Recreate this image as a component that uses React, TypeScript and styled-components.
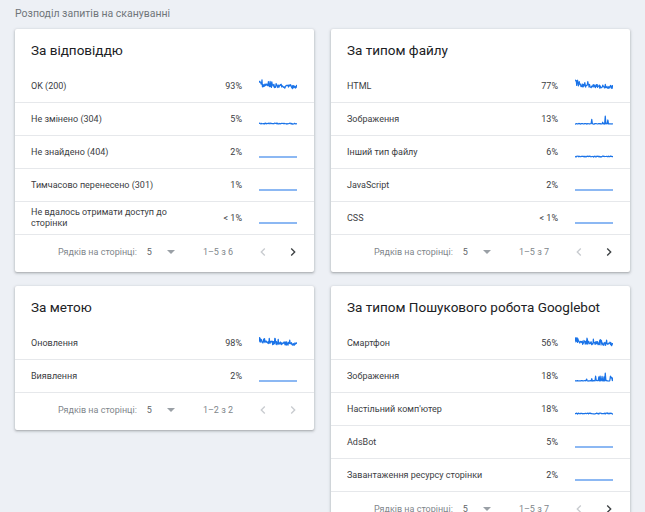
import React from "react";
import styled, { createGlobalStyle } from "styled-components";

const GlobalStyle = createGlobalStyle`
  html, body {
    margin: 0;
    padding: 0;
    background: #edf0f5;
    font-family: Roboto, "Noto Sans", Arial, sans-serif;
  }
  * { box-sizing: border-box; }
`;

type SparkKind = "high" | "spiky" | "low" | "flat";

interface RowData {
  label: string;
  pct: string;
  spark: SparkKind;
}

interface CardData {
  title: string;
  rows: RowData[];
  range: string;
  hasNext: boolean;
}

const cards: CardData[] = [
  {
    title: "За відповіддю",
    rows: [
      { label: "OK (200)", pct: "93%", spark: "high" },
      { label: "Не змінено (304)", pct: "5%", spark: "low" },
      { label: "Не знайдено (404)", pct: "2%", spark: "flat" },
      { label: "Тимчасово перенесено (301)", pct: "1%", spark: "flat" },
      { label: "Не вдалось отримати доступ до сторінки", pct: "< 1%", spark: "flat" },
    ],
    range: "1–5 з 6",
    hasNext: true,
  },
  {
    title: "За типом файлу",
    rows: [
      { label: "HTML", pct: "77%", spark: "high" },
      { label: "Зображення", pct: "13%", spark: "spiky" },
      { label: "Інший тип файлу", pct: "6%", spark: "low" },
      { label: "JavaScript", pct: "2%", spark: "flat" },
      { label: "CSS", pct: "< 1%", spark: "flat" },
    ],
    range: "1–5 з 7",
    hasNext: true,
  },
  {
    title: "За метою",
    rows: [
      { label: "Оновлення", pct: "98%", spark: "high" },
      { label: "Виявлення", pct: "2%", spark: "flat" },
    ],
    range: "1–2 з 2",
    hasNext: false,
  },
  {
    title: "За типом Пошукового робота Googlebot",
    rows: [
      { label: "Смартфон", pct: "56%", spark: "high" },
      { label: "Зображення", pct: "18%", spark: "spiky" },
      { label: "Настільний комп'ютер", pct: "18%", spark: "low" },
      { label: "AdsBot", pct: "5%", spark: "flat" },
      { label: "Завантаження ресурсу сторінки", pct: "2%", spark: "flat" },
    ],
    range: "1–5 з 7",
    hasNext: true,
  },
];

// deterministic noise so the sparklines look the same every render
function rng(seed: number) {
  let s = seed;
  return () => {
    s = (s * 9301 + 49297) % 233280;
    return s / 233280;
  };
}

function sparkPath(kind: SparkKind, seed: number) {
  const rand = rng(seed);
  const n = kind === "high" ? 90 : 60;
  const w = 38;
  const pts: string[] = [];
  for (let i = 0; i < n; i++) {
    const x = (i / (n - 1)) * w;
    let y = 12;
    if (kind === "high") {
      y = 4.5 + rand() * 3.5 + (i / n) * 1.8;
      if (i < 8) y = 0.8 + rand() * 6;
      else if (rand() > 0.88) y -= 3;
    } else if (kind === "spiky") {
      y = 11.4 + rand() * 0.7;
      if (i > 12 && rand() > 0.8) y = 7 + rand() * 4;
      if (i === 47) y = 4;
    } else if (kind === "low") {
      y = 11 + rand() * 1.1;
    }
    pts.push(`${i === 0 ? "M" : "L"}${x.toFixed(2)} ${y.toFixed(2)}`);
  }
  return pts.join(" ");
}

function Sparkline({ kind, seed }: { kind: SparkKind; seed: number }) {
  return (
    <Spark viewBox="0 0 38 14" width={38} height={14}>
      <path d={sparkPath(kind, seed)} fill="none" stroke="#1a73e8" strokeWidth={1.2} strokeLinejoin="round" />
    </Spark>
  );
}

function Chevron({ dir, enabled }: { dir: "left" | "right"; enabled: boolean }) {
  return (
    <PageBtn $enabled={enabled}>
      <svg width="16" height="16" viewBox="0 0 24 24">
        <path
          d={dir === "left" ? "M15.4 7.4 14 6l-6 6 6 6 1.4-1.4L10.8 12z" : "M8.6 16.6 10 18l6-6-6-6-1.4 1.4 4.6 4.6z"}
          fill="currentColor"
        />
      </svg>
    </PageBtn>
  );
}

function StatCard({ card, index }: { card: CardData; index: number }) {
  return (
    <Card>
      <CardTitle>{card.title}</CardTitle>
      {card.rows.map((r, i) => (
        <Row key={r.label + i}>
          <Label>{r.label}</Label>
          <Pct>{r.pct}</Pct>
          <Sparkline kind={r.spark} seed={index * 31 + i * 7 + 3} />
        </Row>
      ))}
      <Footer>
        <FooterLabel>Рядків на сторінці:</FooterLabel>
        <PageSize>
          5
          <Caret />
        </PageSize>
        <Range>{card.range}</Range>
        <Chevron dir="left" enabled={false} />
        <Chevron dir="right" enabled={card.hasNext} />
      </Footer>
    </Card>
  );
}

export default function App() {
  return (
    <Page>
      <GlobalStyle />
      <PageTitle>Розподіл запитів на скануванні</PageTitle>
      <Grid>
        {cards.map((c, i) => (
          <StatCard key={c.title} card={c} index={i} />
        ))}
      </Grid>
    </Page>
  );
}

const Page = styled.div`
  padding: 5px 15px 0;
  min-height: 100vh;
`;

const PageTitle = styled.div`
  font-size: 10.5px;
  line-height: 18px;
  color: #70757a;
  margin-bottom: 6px;
`;

const Grid = styled.div`
  display: grid;
  grid-template-columns: 299px 299px;
  column-gap: 17px;
  row-gap: 14px;
  align-items: start;
`;

const Card = styled.div`
  background: #fff;
  border-radius: 2px;
  box-shadow: 0 1px 2px rgba(60, 64, 67, 0.3), 0 1px 3px 1px rgba(60, 64, 67, 0.12);
`;

const CardTitle = styled.div`
  height: 41px;
  display: flex;
  align-items: center;
  padding: 0 16px;
  font-size: 13.5px;
  color: #202124;
  white-space: nowrap;
`;

const Row = styled.div`
  display: grid;
  grid-template-columns: 1fr 48px 38px;
  column-gap: 17px;
  align-items: center;
  height: 33px;
  padding: 0 17px 0 16px;
  border-bottom: 1px solid #e6e8eb;
  font-size: 9px;
  color: #3c4043;
`;

const Label = styled.div`
  line-height: 11px;
`;

const Pct = styled.div`
  text-align: right;
`;

const Spark = styled.svg`
  display: block;
`;

const Footer = styled.div`
  height: 37px;
  display: flex;
  align-items: center;
  justify-content: flex-end;
  padding: 0 6px 3px 0;
  font-size: 9px;
  color: #80868b;
`;

const FooterLabel = styled.span`
  margin-right: 10px;
`;

const PageSize = styled.span`
  display: flex;
  align-items: center;
  color: #5f6368;
  margin-right: 28px;
`;

const Caret = styled.span`
  margin-left: 15px;
  width: 0;
  height: 0;
  border-left: 4px solid transparent;
  border-right: 4px solid transparent;
  border-top: 4px solid #9aa0a6;
`;

const Range = styled.span`
  color: #80868b;
  margin-right: 15px;
`;

const PageBtn = styled.span<{ $enabled: boolean }>`
  display: flex;
  align-items: center;
  justify-content: center;
  width: 30px;
  height: 24px;
  color: ${(p) => (p.$enabled ? "#3c4043" : "#c8cbcf")};
`;
